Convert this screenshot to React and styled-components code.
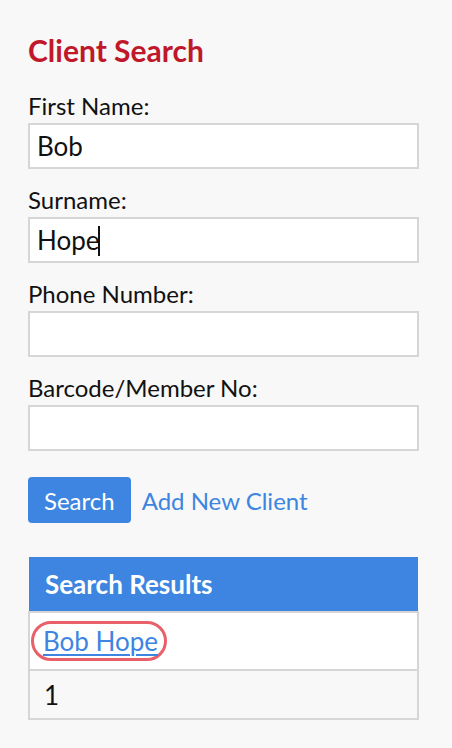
import styled, { createGlobalStyle } from "styled-components";

const GlobalStyle = createGlobalStyle`
    body {
        margin: 0;
        background: #f8f8f8;
        font-family: Lato, "Open Sans", sans-serif;
        color: #111;
    }
`;

const Page = styled.div`
    padding: 32px 33px 30px 28px;
`;

const Title = styled.h1`
    margin: 0 0 24px 0;
    color: #c0182a;
    font-size: 30px;
    font-weight: 700;
    line-height: 36px;
`;

const Field = styled.div`
    display: flex;
    flex-direction: column;
    margin-bottom: 17px;
`;

const Label = styled.label`
    font-size: 24px;
    line-height: 27px;
    margin-bottom: 4px;
`;

const InputWrap = styled.div`
    position: relative;
`;

const Input = styled.input`
    box-sizing: border-box;
    height: 46px;
    width: 100%;
    border: 2px solid #d6d6d6;
    background: #fff;
    padding: 0 7px;
    font-family: inherit;
    font-size: 26px;
    color: #111;
    outline: none;
    caret-color: transparent;
`;

/* text cursor shown in the focused field */
const Caret = styled.span`
    position: absolute;
    left: ${(p) => p.$x}px;
    top: 9px;
    width: 2px;
    height: 30px;
    background: #111;
`;

const Actions = styled.div`
    display: flex;
    align-items: center;
    gap: 11px;
    margin-top: 26px;
`;

const Button = styled.button`
    height: 46px;
    padding: 0 16px;
    border: none;
    border-radius: 4px;
    background: #3d85e0;
    color: #fff;
    font-family: inherit;
    font-size: 24px;
`;

const TextLink = styled.a`
    color: #3d85e0;
    font-size: ${(p) => (p.$large ? "26px" : "24px")};
    text-decoration: ${(p) => (p.$underline ? "underline" : "none")};
    text-decoration-thickness: 2px;
    text-underline-offset: 3px;
    cursor: pointer;
`;

const Results = styled.table`
    margin-top: 34px;
    width: 391px;
    border-collapse: collapse;
`;

const HeadCell = styled.th`
    height: 54px;
    padding: 0 16px;
    background: #3d85e0;
    color: #fff;
    text-align: left;
    font-size: 26px;
    font-weight: 700;
`;

const Cell = styled.td`
    box-sizing: border-box;
    height: ${(p) => p.$h}px;
    padding: 0 14px;
    border: 2px solid #d6d6d6;
    background: ${(p) => (p.$alt ? "#f8f8f8" : "#fff")};
    font-size: 26px;
`;

const Circled = styled.span`
    display: inline-flex;
    align-items: center;
    box-sizing: border-box;
    height: 40px;
    margin-left: -13px;
    padding: 0 6px 0 9px;
    border: 3px solid #e8606a;
    border-radius: 20px;
`;

export default function App() {
    return (
        <Page>
            <GlobalStyle />
            <Title>Client Search</Title>
            <Field>
                <Label>First Name:</Label>
                <Input defaultValue="Bob" />
            </Field>
            <Field>
                <Label>Surname:</Label>
                <InputWrap>
                    <Input defaultValue="Hope" />
                    <Caret $x={70} />
                </InputWrap>
            </Field>
            <Field>
                <Label>Phone Number:</Label>
                <Input />
            </Field>
            <Field>
                <Label>Barcode/Member No:</Label>
                <Input />
            </Field>
            <Actions>
                <Button>Search</Button>
                <TextLink>Add New Client</TextLink>
            </Actions>
            <Results>
                <thead>
                    <tr>
                        <HeadCell>Search Results</HeadCell>
                    </tr>
                </thead>
                <tbody>
                    <tr>
                        <Cell $h={58}>
                            <Circled>
                                <TextLink $underline $large>Bob Hope</TextLink>
                            </Circled>
                        </Cell>
                    </tr>
                    <tr>
                        <Cell $h={49} $alt>1</Cell>
                    </tr>
                </tbody>
            </Results>
        </Page>
    );
}
